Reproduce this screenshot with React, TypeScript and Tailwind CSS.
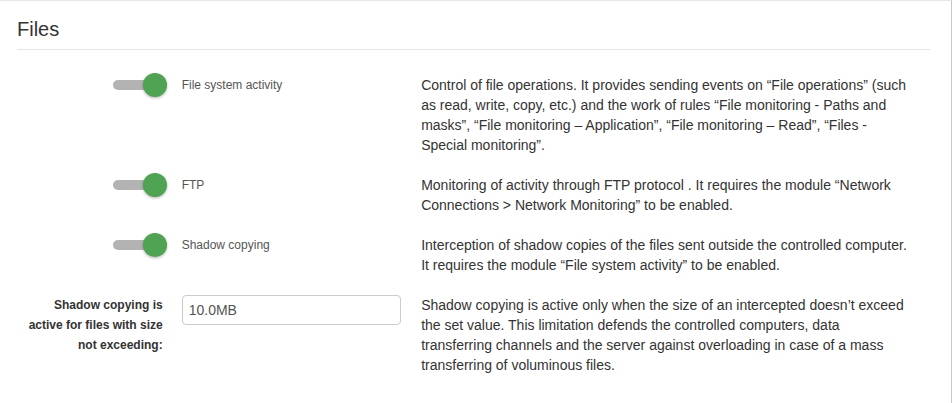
const rows = [
  {
    label: "File system activity",
    lines: [
      "Control of file operations. It provides sending events on “File operations” (such",
      "as read, write, copy, etc.) and the work of rules “File monitoring - Paths and",
      "masks”, “File monitoring – Application”, “File monitoring – Read”, “Files -",
      "Special monitoring”.",
    ],
  },
  {
    label: "FTP",
    lines: [
      "Monitoring of activity through FTP protocol . It requires the module “Network",
      "Connections > Network Monitoring” to be enabled.",
    ],
  },
  {
    label: "Shadow copying",
    lines: [
      "Interception of shadow copies of the files sent outside the controlled computer.",
      "It requires the module “File system activity” to be enabled.",
    ],
  },
];

const limitLines = [
  "Shadow copying is active only when the size of an intercepted doesn’t exceed",
  "the set value. This limitation defends the controlled computers, data",
  "transferring channels and the server against overloading in case of a mass",
  "transferring of voluminous files.",
];

function Toggle() {
  return (
    <div className="relative h-[24px] w-[54px]">
      <div className="absolute left-0 top-[7px] h-[10px] w-[40px] rounded-full bg-[#b3b3b3]" />
      <div className="absolute right-0 top-0 h-[24px] w-[24px] rounded-full bg-[#4fa352] shadow-[0_1px_3px_rgba(0,0,0,0.3)]" />
    </div>
  );
}

function Desc({ lines }: { lines: string[] }) {
  return (
    <p className="w-[510px] text-[14px] leading-[20px]">
      {lines.map((l) => (
        <span key={l} className="block whitespace-nowrap">
          {l}
        </span>
      ))}
    </p>
  );
}

export default function App() {
  return (
    <div
      className="h-[403px] w-[952px] border-t border-r border-t-[#e8e8e8] border-r-[#c8c8c8] bg-white pl-[17px] pr-[21px] text-[#333]"
      style={{ fontFamily: '"Liberation Sans", Arial, sans-serif' }}
    >
      <h2 className="pt-[18px] pb-[10px] text-[20px] leading-[20px] border-b border-[#e5e5e5]">Files</h2>
      <div className="flex flex-col gap-[20px] pt-[25px]">
        {rows.map((r) => (
          <div key={r.label} className="flex">
            <div className="flex w-[150px] justify-end">
              <div className="-mt-[2px]">
                <Toggle />
              </div>
            </div>
            <div className="ml-[15px] w-[240px] text-[12px] leading-[20px] text-[#555]">{r.label}</div>
            <Desc lines={r.lines} />
          </div>
        ))}
        <div className="flex">
          <div className="w-[146px] text-right text-[12px] font-bold leading-[20px]">
            Shadow copying is active for files with size not exceeding:
          </div>
          <div className="ml-[19px] w-[240px]">
            <input
              readOnly
              value="10.0MB"
              className="h-[30px] w-[219px] rounded-[4px] border border-[#ccc] px-[6px] text-[14px] text-[#555] outline-none"
            />
          </div>
          <Desc lines={limitLines} />
        </div>
      </div>
    </div>
  );
}
